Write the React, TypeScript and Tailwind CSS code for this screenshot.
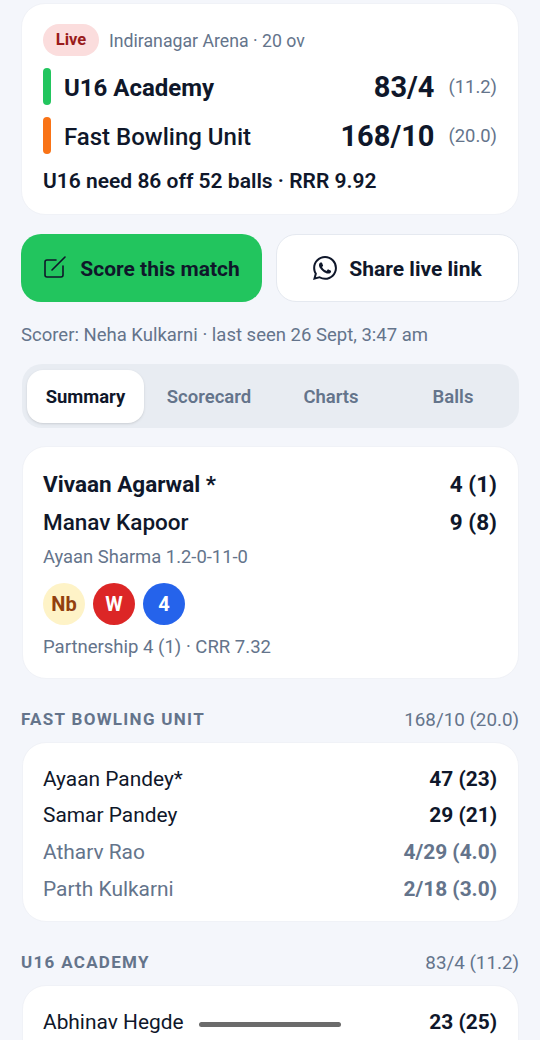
import React from "react"

const font = { fontFamily: "Roboto, sans-serif" }

const WhatsAppIcon = () => (
    <svg viewBox="0 0 24 24" className="w-6 h-6 fill-[#0f172a]">
        <path d="M17.47 14.38c-.3-.15-1.76-.87-2.03-.97-.27-.1-.47-.15-.67.15-.2.3-.77.97-.94 1.17-.17.2-.35.22-.65.07-.3-.15-1.26-.46-2.39-1.47-.88-.79-1.48-1.76-1.65-2.06-.17-.3-.02-.46.13-.61.13-.13.3-.35.45-.52.15-.17.2-.3.3-.5.1-.2.05-.37-.03-.52-.07-.15-.67-1.61-.92-2.21-.24-.58-.49-.5-.67-.51h-.57c-.2 0-.52.07-.79.37-.27.3-1.04 1.02-1.04 2.48s1.07 2.88 1.21 3.07c.15.2 2.1 3.2 5.08 4.49.71.31 1.26.49 1.69.63.71.23 1.36.2 1.87.12.57-.09 1.76-.72 2.01-1.41.25-.69.25-1.29.17-1.41-.07-.13-.27-.2-.57-.35zM12.05 21.8h-.01a9.87 9.87 0 0 1-5.03-1.38l-.36-.21-3.74.98 1-3.65-.24-.37a9.86 9.86 0 0 1-1.51-5.26c0-5.45 4.44-9.88 9.89-9.88 2.64 0 5.12 1.03 6.99 2.9a9.83 9.83 0 0 1 2.89 6.99c0 5.45-4.44 9.88-9.89 9.88zM20.46 3.49A11.82 11.82 0 0 0 12.05 0C5.5 0 .16 5.34.16 11.89c0 2.1.55 4.14 1.59 5.95L.06 24l6.3-1.65a11.88 11.88 0 0 0 5.68 1.45h.01c6.55 0 11.89-5.34 11.89-11.89 0-3.18-1.24-6.16-3.48-8.41z" />
    </svg>
)

const Ball = ({ label, className }: { label: string; className: string }) => (
    <div className={`w-[42px] h-[42px] rounded-full flex items-center justify-center text-[20px] font-bold ${className}`}>{label}</div>
)

const PlayerRow = ({ name, score, muted }: { name: string; score: string; muted?: boolean }) => (
    <div className={`flex justify-between items-center h-[36.4px] text-[20.9px] ${muted ? "text-[#64748b]" : "text-[#0f172a]"}`}>
        <span>{name}</span>
        <span className="font-bold">{score}</span>
    </div>
)

const SectionHead = ({ title, score }: { title: string; score: string }) => (
    <div className="flex justify-between items-center h-6">
        <span className="text-[17px] font-bold tracking-[1.3px] text-[#64748b]">{title}</span>
        <span className="text-[18.8px] text-[#64748b]">{score}</span>
    </div>
)

export default function App() {
    return (
        <div style={font} className="relative w-[540px] h-[1040px] overflow-hidden bg-[#f4f6fb] px-[21px] pt-[3px]">
            <div className="bg-white rounded-[24px] border border-[#f0f2f7] h-[212px] px-[21px] pt-[20px]">
                <div className="flex items-center gap-[10px]">
                    <span className="h-8 w-[56px] rounded-full bg-[#fbdddd] text-[#991b1b] text-[16.5px] font-bold flex items-center justify-center">Live</span>
                    <span className="text-[17.7px] text-[#64748b] pt-[2px]">Indiranagar Arena · 20 ov</span>
                </div>
                <div className="flex items-center mt-[11px] h-[38px]">
                    <span className="w-2 h-[37px] rounded-full bg-[#22c55e] mr-[13px]"></span>
                    <span className="text-[24px] font-bold text-[#0f172a] flex-1 pt-[3px]">U16 Academy</span>
                    <span className="text-[29px] font-bold text-[#0f172a] pt-[4px]">83/4</span>
                    <span className="text-[18.4px] text-[#64748b] ml-[14px] pt-[2px]">(11.2)</span>
                </div>
                <div className="flex items-center mt-[11px] h-[38px]">
                    <span className="w-2 h-[37px] rounded-full bg-[#f97316] mr-[13px]"></span>
                    <span className="text-[24px] font-medium text-[#0f172a] flex-1 pt-[3px]">Fast Bowling Unit</span>
                    <span className="text-[29px] font-bold text-[#0f172a] pt-[4px]">168/10</span>
                    <span className="text-[18.4px] text-[#64748b] ml-[14px] pt-[2px]">(20.0)</span>
                </div>
                <div className="mt-[12px] text-[21px] font-semibold text-[#0f172a]">U16 need 86 off 52 balls · RRR 9.92</div>
            </div>

            <div className="flex gap-[14px] mt-[19px]">
                <button className="w-[241px] h-[68px] rounded-[20px] bg-[#22c55e] flex items-center justify-center gap-[13px] text-[21px] font-bold text-[#0f172a]">
                    <svg viewBox="0 0 24 24" fill="none" stroke="#0f172a" strokeWidth="1.6" strokeLinecap="round" strokeLinejoin="round" className="w-6 h-6">
                        <path d="M13 4H4a2 2 0 0 0-2 2v13a2 2 0 0 0 2 2h14a2 2 0 0 0 2-2v-9" />
                        <path d="M9 14 22 1" />
                    </svg>
                    <span className="pt-[3px]">Score this match</span>
                </button>
                <button className="w-[243px] h-[68px] rounded-[20px] bg-white border border-[#e5e9f0] flex items-center justify-center gap-[12px] text-[21px] font-bold text-[#0f172a]">
                    <WhatsAppIcon />
                    <span className="pt-[3px]">Share live link</span>
                </button>
            </div>

            <p className="mt-[21px] text-[18.5px] text-[#64748b] leading-[24px]">Scorer: Neha Kulkarni · last seen 26 Sept, 3:47 am</p>

            <div className="flex mt-[17px] h-[64px] rounded-[20px] bg-[#e8ecf2] p-[5px] pt-[6px] ml-[1px]">
                <div className="w-[117px] rounded-[16px] bg-white shadow-sm flex items-center justify-center text-[18.4px] font-bold text-[#0f172a]">Summary</div>
                <div className="flex-1 grid grid-cols-3 items-center text-center text-[18.5px] font-semibold text-[#64748b] pl-[4px] pt-[2px]">
                    <span>Scorecard</span>
                    <span>Charts</span>
                    <span>Balls</span>
                </div>
            </div>

            <div className="bg-white rounded-[24px] border border-[#f0f2f7] h-[233px] mt-[18px] ml-[1px] px-[20px] pt-[19px]">
                <div className="flex justify-between items-center h-[38px] text-[22.5px] font-bold text-[#0f172a] pl-0 pr-[1px]">
                    <span>Vivaan Agarwal *</span>
                    <span>4 (1)</span>
                </div>
                <div className="flex justify-between items-center h-[38px] text-[22.5px] text-[#0f172a] pr-[1px]">
                    <span className="font-medium">Manav Kapoor</span>
                    <span className="font-bold">9 (8)</span>
                </div>
                <div className="text-[18.4px] text-[#64748b] leading-[32px] -mt-[1px]">Ayaan Sharma 1.2-0-11-0</div>
                <div className="flex gap-2 mt-[10px]">
                    <Ball label="Nb" className="bg-[#fef3c7] text-[#92400e]" />
                    <Ball label="W" className="bg-[#dc2626] text-white" />
                    <Ball label="4" className="bg-[#2563eb] text-white" />
                </div>
                <div className="text-[18.55px] text-[#64748b] mt-[6px] leading-[32px]">Partnership 4 (1) · CRR 7.32</div>
            </div>

            <div className="mt-[29px]">
                <SectionHead title="FAST BOWLING UNIT" score="168/10 (20.0)" />
            </div>
            <div className="bg-white rounded-[24px] border border-[#f0f2f7] h-[180px] mt-[10px] ml-[1px] pl-[20px] pr-[21px] pt-[18px]">
                <PlayerRow name="Ayaan Pandey*" score="47 (23)" />
                <PlayerRow name="Samar Pandey" score="29 (21)" />
                <div className="pt-[1px]">
                    <PlayerRow name="Atharv Rao" score="4/29 (4.0)" muted />
                </div>
                <PlayerRow name="Parth Kulkarni" score="2/18 (3.0)" muted />
            </div>

            <div className="mt-[29px]">
                <SectionHead title="U16 ACADEMY" score="83/4 (11.2)" />
            </div>
            <div className="bg-white rounded-t-[24px] border border-[#f0f2f7] h-[100px] mt-[10px] ml-[1px] pl-[20px] pr-[21px] pt-[18px]">
                <PlayerRow name="Abhinav Hegde" score="23 (25)" />
            </div>

            {/* home indicator */}
            <div className="absolute left-[199px] top-[1022px] w-[142px] h-[5px] rounded-full bg-[#6b6b6b]"></div>
        </div>
    )
}
